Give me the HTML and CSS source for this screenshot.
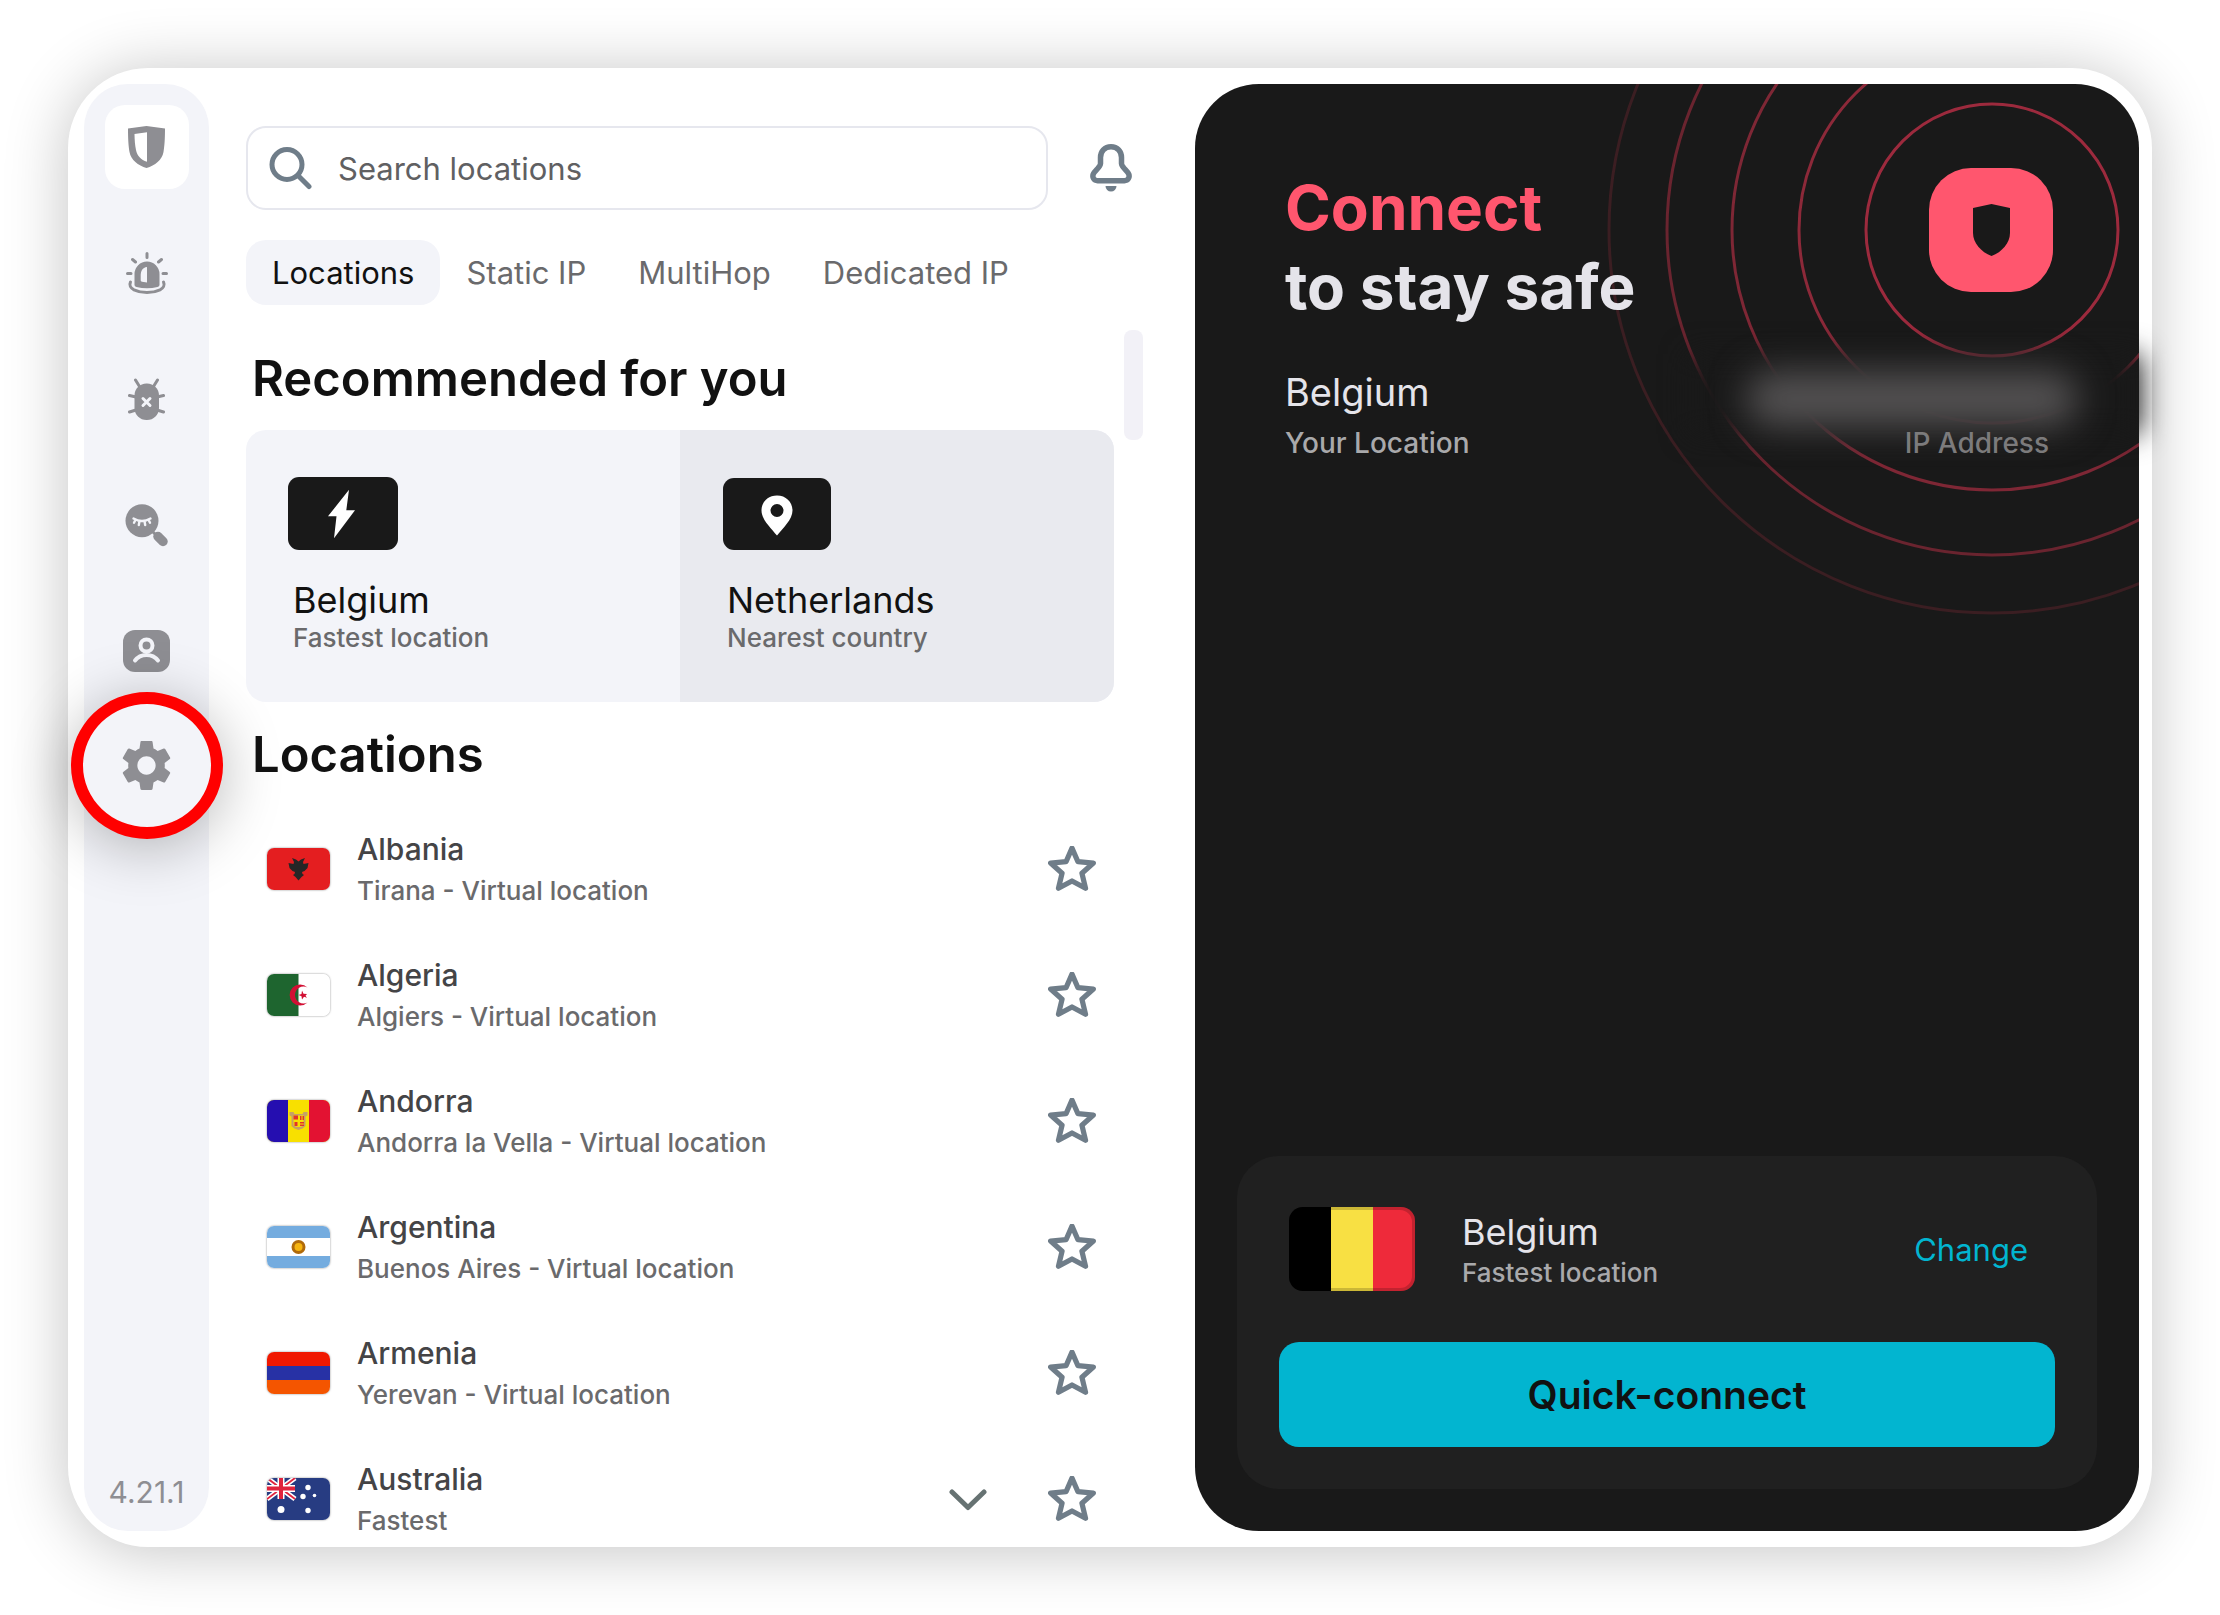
FILE: index.html
```html
<!DOCTYPE html>
<html lang="en">
<head>
<meta charset="utf-8">
<meta name="viewport" content="width=device-width, initial-scale=1">
<title>VPN locations</title>
<link rel="stylesheet" href="styles.css">
</head>
<body>
<div class="window">
  <nav class="sidebar" aria-label="Sections">
    <button class="nav-item nav-item-active" type="button" aria-label="VPN">
      <svg width="37" height="42" viewBox="0 0 37 42"><path fill="currentColor" fill-rule="evenodd" d="M0 2.500 18.500 0 37 2.500C37 13 36.500 20 35.500 26 34 34 27 39.500 18.500 42 10 39.500 3 34 1.500 26 .5 20 0 13 0 2.500ZM6.500 8C6.600 14 7 19 8 24 9 29.500 13 34 19 35.800V6.300Z"/></svg>
    </button>
    <button class="nav-item" type="button" aria-label="Alert">
      <svg width="42" height="43" viewBox="0 0 42 43"><path fill="currentColor" fill-rule="evenodd" d="M8.500 33V22a12.500 12.500 0 0 1 25 0v11q0 1.500-2 2-10.500 2.500-21 0-2-.5-2-2ZM21 15c-4.500.6-6.300 4-6.300 9v4.500q0 1 1.300 1.200l5 .8Z"/><g fill="none" stroke="currentColor" stroke-width="3" stroke-linecap="round"><path d="M4.500 30C3 33 4.500 36 8 37.800c7.500 3.600 18.500 3.600 26 0 3.500-1.800 5-4.800 3.500-7.800"/><path d="M21 1.500v4M1.500 21.500H5M37 21.500h3.500M6.500 7.500 9.500 10M35.500 7.500l-3 2.500"/></g></svg>
    </button>
    <button class="nav-item" type="button" aria-label="Antivirus">
      <svg width="37" height="43" viewBox="0 0 37 43"><rect x="6.500" y="5.500" width="24.500" height="36.500" rx="12" fill="currentColor"/><path fill="none" stroke="currentColor" stroke-width="3" stroke-linecap="round" d="m7.500 2 4 6.500M29.500 2l-4 6.500M1.500 17.500 8 19M35.500 17.500 29 19M1.500 34 8 32M35.500 34 29 32"/><path fill="none" stroke="#f3f4f9" stroke-width="3" stroke-linecap="round" d="m15 20.500 7 7m0-7-7 7"/></svg>
    </button>
    <button class="nav-item" type="button" aria-label="Private search">
      <svg width="43" height="43" viewBox="0 0 43 43"><circle cx="17" cy="16.700" r="16.500" fill="currentColor"/><path fill="none" stroke="currentColor" stroke-width="3" d="m27 27 5 5"/><path fill="none" stroke="currentColor" stroke-width="9.500" stroke-linecap="round" d="m33 32.500 5 5"/><path fill="none" stroke="#f3f4f9" stroke-width="2.400" stroke-linecap="round" d="M8.500 14.500q8.500 5 17 0M10.500 15.800l-1.500 3M14.500 17l-.7 4M19.500 17l.7 4M23.500 15.800l1.500 3"/></svg>
    </button>
    <button class="nav-item" type="button" aria-label="Alternative ID">
      <svg width="47" height="42" viewBox="0 0 47 42"><rect width="47" height="42" rx="12" fill="currentColor"/><g fill="none" stroke="#f3f4f9" stroke-width="4" stroke-linecap="round"><circle cx="23.500" cy="15.500" r="6"/><path d="M12 30.500c5.500-7.500 17.500-7.500 23 0"/></g></svg>
    </button>
    <button class="nav-item nav-item-marked" type="button" aria-label="Settings">
      <svg width="61" height="61" viewBox="0 0 24 24"><path fill="currentColor" d="M19.140 12.940c.04-.3.06-.61.06-.94 0-.32-.02-.64-.07-.94l2.030-1.580c.18-.14.23-.41.12-.61l-1.920-3.320c-.12-.22-.37-.29-.59-.22l-2.390.96c-.5-.38-1.030-.7-1.620-.94l-.36-2.540c-.04-.24-.24-.41-.48-.41h-3.840c-.24 0-.43.17-.47.41l-.36 2.540c-.59.24-1.130.57-1.620.94l-2.390-.96c-.22-.08-.47 0-.59.22L2.740 8.870c-.12.21-.08.47.12.61l2.030 1.580c-.05.3-.09.63-.09.94s.02.64.07.94l-2.030 1.580c-.18.14-.23.41-.12.61l1.920 3.320c.12.22.37.29.59.22l2.390-.96c.5.38 1.030.7 1.620.94l.36 2.540c.05.24.24.41.48.41h3.840c.24 0 .44-.17.47-.41l.36-2.540c.59-.24 1.130-.56 1.620-.94l2.390.96c.22.08.47 0 .59-.22l1.920-3.320c.12-.22.07-.47-.12-.61l-2.010-1.580zM12 15.600c-1.980 0-3.600-1.620-3.600-3.600s1.620-3.600 3.600-3.600 3.600 1.620 3.600 3.600-1.620 3.600-3.600 3.600z"/></svg>
    </button>
    <span class="version">4.21.1</span>
  </nav>

  <main class="main">
    <div class="toolbar">
      <label class="search">
        <svg width="43" height="43" viewBox="0 0 43 43" fill="none" stroke="currentColor" stroke-width="5" stroke-linecap="round" aria-hidden="true"><circle cx="18" cy="17.500" r="15"/><path d="m29 28.500 11 11"/></svg>
        <input class="search-input" type="text" placeholder="Search locations" aria-label="Search locations">
      </label>
      <button class="bell" type="button" aria-label="Notifications">
        <svg width="42" height="48" viewBox="0 0 42 48"><path fill="none" stroke="currentColor" stroke-width="5.500" d="M21 2.800C14.500 2.800 10.500 7.500 10.500 13.500V19.500C10.500 23 4.500 27 3.300 30 2 33.500 4 36.700 7.500 36.700H34.500C38 36.700 40 33.500 38.700 30 37.500 27 31.500 23 31.500 19.500V13.500C31.500 7.500 27.500 2.800 21 2.800Z"/><path fill="currentColor" d="M15.500 42h11a5.500 5.500 0 0 1-11 0Z"/></svg>
      </button>
    </div>

    <div class="tabs" role="tablist">
      <button class="tab tab-active" type="button" role="tab" aria-selected="true">Locations</button>
      <button class="tab" type="button" role="tab" aria-selected="false">Static IP</button>
      <button class="tab" type="button" role="tab" aria-selected="false">MultiHop</button>
      <button class="tab" type="button" role="tab" aria-selected="false">Dedicated IP</button>
    </div>

    <div class="scroll-wrap">
      <div class="scroll">
        <h2 class="heading">Recommended for you</h2>
        <div class="recommended">
          <button class="pick" type="button">
            <svg class="pick-icon" width="110" height="73" viewBox="0 0 110 73"><rect width="110" height="73" rx="11" fill="#191919"/><path fill="#fff" d="M61 12.700 40 39.300h8.500l-2.500 22L67 33.300h-8.700Z"/></svg>
            <span class="pick-title">Belgium</span>
            <span class="sub">Fastest location</span>
          </button>
          <button class="pick pick-alt" type="button">
            <svg class="pick-icon" width="110" height="73" viewBox="0 0 110 73"><rect x="1" y="1" width="108" height="72" rx="11" fill="#191919"/><path fill="#fff" fill-rule="evenodd" d="M55 18.500c-9 0-15.500 6.500-15.500 15C39.500 42.500 49 51 55 58.500 61 51 70.500 42.500 70.500 33.500c0-8.500-6.500-15-15.500-15Zm0 8.500a6.500 6.500 0 1 1 0 13 6.500 6.500 0 0 1 0-13Z"/></svg>
            <span class="pick-title">Netherlands</span>
            <span class="sub">Nearest country</span>
          </button>
        </div>

        <h2 class="heading">Locations</h2>
        <ul class="rows">
          <li class="row">
            <svg class="flag" viewBox="0 0 63 42"><path fill="#e41e20" d="M0 0h63v42H0z"/><path fill="#262626" d="m25 10 4 1.500 2.500 2 2.500-2 4-1.500-2 4 .5 2 5-1-1 5-3 3-2.500 1 .5 2 1.500 1-2.500 2-3 3.500-3-3.500-2.500-2 1.500-1 .5-2-2.500-1-3-3-1-5 5 1 .5-2Z"/></svg>
            <div class="place"><span class="name">Albania</span><span class="sub">Tirana - Virtual location</span></div>
            <button class="star" type="button" aria-label="Add Albania to favourites"><svg width="48" height="46" viewBox="1 2 46 44"><path d="M24 4 29.700 17 44.500 18.300 33.500 28 37 42.500 24 35.500 11 42.500 14.500 28 3.500 18.300 18.300 17Z"/></svg></button>
          </li>
          <li class="row">
            <svg class="flag" viewBox="0 0 63 42"><path fill="#fff" d="M0 0h63v42H0z"/><path fill="#1e652f" d="M0 0h31.500v42H0z"/><path fill="#d21034" d="M40.500 13.500a10.500 10.500 0 1 0 0 15 8.500 8.500 0 1 1 0-15Z"/><path fill="#d21034" d="m40 20-3.500-.3L35 16.500l-.5 3.500-3 1 3 1.200.5 3.300 2-2.800 3 1-1.500-2Z"/></svg>
            <div class="place"><span class="name">Algeria</span><span class="sub">Algiers - Virtual location</span></div>
            <button class="star" type="button" aria-label="Add Algeria to favourites"><svg width="48" height="46" viewBox="1 2 46 44"><path d="M24 4 29.700 17 44.500 18.300 33.500 28 37 42.500 24 35.500 11 42.500 14.500 28 3.500 18.300 18.300 17Z"/></svg></button>
          </li>
          <li class="row">
            <svg class="flag" viewBox="0 0 63 42"><path fill="#f8e000" d="M0 0h63v42H0z"/><path fill="#250eb0" d="M0 0h21v42H0z"/><path fill="#e31232" d="M42 0h21v42H42z"/><path fill="#c6a065" d="M22.500 12h4l1 2h8l1-2h4v3.500l-2 1V26l-3 2.500-4 1.500-4-1.500-3-2.500v-9.500l-2-1Z"/><path fill="#f8e000" d="M26.500 15.500h10V25.500q-5 3-10 0Z"/><path fill="#e2322b" d="M26.500 15.500h4.500v4h-4.500zM33 16h1.500v4H33zM35.500 16H37v4h-1.500zM27.500 22h3v4h-3zM33 22h4v1.500h-4zM33 24.500h4V26h-4z"/></svg>
            <div class="place"><span class="name">Andorra</span><span class="sub">Andorra la Vella - Virtual location</span></div>
            <button class="star" type="button" aria-label="Add Andorra to favourites"><svg width="48" height="46" viewBox="1 2 46 44"><path d="M24 4 29.700 17 44.500 18.300 33.500 28 37 42.500 24 35.500 11 42.500 14.500 28 3.500 18.300 18.300 17Z"/></svg></button>
          </li>
          <li class="row">
            <svg class="flag" viewBox="0 0 63 42"><path fill="#fff" d="M0 0h63v42H0z"/><path fill="#74acdf" d="M0 0h63v12H0zM0 30h63v12H0z"/><circle cx="31.500" cy="21" r="7" fill="#b06a0a"/><circle cx="31.500" cy="21" r="4" fill="#f6b40e"/></svg>
            <div class="place"><span class="name">Argentina</span><span class="sub">Buenos Aires - Virtual location</span></div>
            <button class="star" type="button" aria-label="Add Argentina to favourites"><svg width="48" height="46" viewBox="1 2 46 44"><path d="M24 4 29.700 17 44.500 18.300 33.500 28 37 42.500 24 35.500 11 42.500 14.500 28 3.500 18.300 18.300 17Z"/></svg></button>
          </li>
          <li class="row">
            <svg class="flag" viewBox="0 0 63 42"><path fill="#f01800" d="M0 0h63v14H0z"/><path fill="#2731a5" d="M0 14h63v14H0z"/><path fill="#f45500" d="M0 28h63v14H0z"/></svg>
            <div class="place"><span class="name">Armenia</span><span class="sub">Yerevan - Virtual location</span></div>
            <button class="star" type="button" aria-label="Add Armenia to favourites"><svg width="48" height="46" viewBox="1 2 46 44"><path d="M24 4 29.700 17 44.500 18.300 33.500 28 37 42.500 24 35.500 11 42.500 14.500 28 3.500 18.300 18.300 17Z"/></svg></button>
          </li>
          <li class="row">
            <svg class="flag" viewBox="0 0 63 42"><path fill="#273c82" d="M0 0h63v42H0z"/><path stroke="#fff" stroke-width="5" d="m0 0 28 21M28 0 0 21"/><path stroke="#e0233d" stroke-width="1.800" d="m0 0 28 21M28 0 0 21"/><path stroke="#fff" stroke-width="7" d="M14 0v21M0 10.500h28"/><path stroke="#e0233d" stroke-width="4" d="M14 0v21M0 10.500h28"/><g fill="#fff"><circle cx="14" cy="31.500" r="3.500"/><circle cx="41" cy="9.500" r="2.700"/><circle cx="36" cy="18.500" r="2.700"/><circle cx="47.500" cy="17.500" r="1.800"/><circle cx="41" cy="32.500" r="2.700"/></g></svg>
            <div class="place"><span class="name">Australia</span><span class="sub">Fastest</span></div>
            <button class="expand" type="button" aria-label="Show Australian cities"><svg width="38" height="26" viewBox="0 0 38 26"><path d="m3 6 16 15.500L35 6"/></svg></button>
            <button class="star" type="button" aria-label="Add Australia to favourites"><svg width="48" height="46" viewBox="1 2 46 44"><path d="M24 4 29.700 17 44.500 18.300 33.500 28 37 42.500 24 35.500 11 42.500 14.500 28 3.500 18.300 18.300 17Z"/></svg></button>
          </li>
        </ul>
      </div>
      <span class="thumb" aria-hidden="true"></span>
    </div>
  </main>

  <section class="panel" aria-label="Connection">
    <div class="rings" aria-hidden="true">
      <svg width="770" height="770" viewBox="-385 -385 770 770" fill="none" stroke="#c23048" stroke-width="3">
        <circle r="126" opacity=".78"/><circle r="193" opacity=".68"/><circle r="260" opacity=".6"/><circle r="325" opacity=".48"/><circle r="383" opacity=".2"/>
      </svg>
    </div>
    <div class="status">
      <h1 class="slogan"><span class="slogan-accent">Connect</span><br>to stay safe</h1>
      <span class="badge"><svg width="37" height="52" viewBox="0 0 37 52"><path fill="#191919" d="M0 4 18.500 0 37 4V29C37 39 29 48 18.500 52 8 48 0 39 0 29Z"/></svg></span>
    </div>
    <dl class="facts">
      <div class="fact"><dd class="fact-value">Belgium</dd><dt class="fact-label">Your Location</dt></div>
      <div class="fact fact-ip"><dd class="fact-value redacted" aria-label="Hidden"></dd><dt class="fact-label fact-label-dim">IP Address</dt></div>
    </dl>

    <div class="quick">
      <div class="quick-place">
        <svg class="quick-flag" width="126" height="84" viewBox="0 0 126 84"><path d="M0 0h42v84H0z"/><path fill="#f8e043" d="M42 0h42v84H42z"/><path fill="#ee2a3a" d="M84 0h42v84H84z"/><rect x="1" y="1" width="124" height="82" rx="14" fill="none" stroke="#000" stroke-opacity=".18" stroke-width="4"/></svg>
        <div class="quick-text"><span class="quick-title">Belgium</span><span class="sub sub-light">Fastest location</span></div>
        <a class="change" href="#">Change</a>
      </div>
      <button class="connect" type="button">Quick-connect</button>
    </div>
  </section>
</div>
</body>
</html>
```
FILE: styles.css
```css
* {
  box-sizing: border-box;
}

body {
  margin: 0;
  padding: 68px;
  background: #fff;
  color: #111;
  font-family: Inter, "Liberation Sans", sans-serif;
}

button {
  margin: 0;
  padding: 0;
  border: 0;
  background: none;
  color: inherit;
  font: inherit;
  text-align: left;
  cursor: pointer;
}

svg {
  display: block;
}

.window {
  display: grid;
  grid-template-columns: 125px minmax(0, 986fr) minmax(0, 944fr);
  height: calc(100vh - 136px);
  min-height: 1100px;
  padding: 16px 13px 0 16px;
  border-radius: 80px;
  background: #fff;
  box-shadow: 0 4px 64px rgba(0, 0, 0, 0.24);
}

/* Sidebar */

.sidebar {
  display: flex;
  flex-direction: column;
  align-items: center;
  gap: 42px;
  margin-bottom: 16px;
  padding: 21px 0;
  border-radius: 44px;
  background: #f3f4f9;
  color: #8e8e93;
}

.nav-item {
  display: flex;
  flex: none;
  align-items: center;
  justify-content: center;
  width: 84px;
  height: 84px;
  border-radius: 20px;
}

.nav-item-active {
  background: #fff;
}

/* The ring reaches past both edges of the sidebar */
.nav-item-marked {
  width: 152px;
  height: 147px;
  margin-top: -43px;
  border: 12px solid #f00;
  border-radius: 50%;
  background: #f3f4f9;
  box-shadow: 0 8px 60px rgba(0, 0, 0, 0.28);
}

.version {
  margin-top: auto;
  font-size: 30px;
  line-height: 36px;
}

/* Location picker */

.main {
  display: flex;
  flex-direction: column;
  min-height: 0;
  padding: 42px 42px 0 37px;
}

.toolbar {
  display: flex;
  gap: 21px;
}

.search {
  display: flex;
  flex: 1;
  align-items: center;
  gap: 26px;
  height: 84px;
  padding: 0 21px;
  border: 2px solid #e6e7ee;
  border-radius: 20px;
  color: #6f7d89;
}

.search-input {
  flex: 1;
  min-width: 0;
  padding: 0;
  border: 0;
  outline: 0;
  background: none;
  color: #111;
  font: inherit;
  font-size: 31px;
}

.search-input::placeholder {
  color: #606062;
  opacity: 1;
}

.bell {
  display: flex;
  align-items: center;
  justify-content: center;
  width: 84px;
  height: 84px;
  color: #6f7d89;
}

.tabs {
  display: flex;
  margin-top: 30px;
}

.tab {
  height: 65px;
  padding: 0 26px;
  border-radius: 20px;
  color: #6a6a6c;
  font-size: 31px;
  white-space: nowrap;
}

.tab-active {
  background: #f3f4f9;
  color: #111;
}

.scroll-wrap {
  position: relative;
  flex: 1;
  min-height: 0;
  margin-top: 25px;
}

.scroll {
  height: 100%;
  padding: 18px 39px 0 0;
  overflow-y: auto;
  scrollbar-width: none;
}

.thumb {
  position: absolute;
  top: 0;
  right: 10px;
  width: 19px;
  height: 110px;
  border-radius: 8px;
  background: #f2f1f7;
}

.heading {
  margin: 0 0 20px;
  padding-left: 6px;
  font-size: 49px;
  font-weight: 600;
  line-height: 62px;
}

.recommended {
  display: grid;
  grid-template-columns: 1fr 1fr;
  margin-bottom: 22px;
  border-radius: 20px;
  background: #f3f4f9;
  overflow: hidden;
}

.pick {
  display: flex;
  flex-direction: column;
  padding: 47px 47px 48px;
}

.pick-alt {
  background: #e9eaef;
}

.pick-icon {
  margin: 0 0 28px -5px;
}

.pick-title {
  font-size: 36px;
  line-height: 44px;
}

.sub {
  color: #6a6a6c;
  font-size: 26px;
  font-weight: 500;
  line-height: 32px;
}

.rows {
  margin: 0;
  padding: 0;
  list-style: none;
}

.row {
  display: flex;
  align-items: center;
  height: 126px;
  padding: 0 18px 0 21px;
}

.flag {
  flex: none;
  width: 63px;
  height: 42px;
  border-radius: 7px;
  box-shadow: 0 0 2px rgba(0, 0, 0, 0.5);
}

.place {
  display: flex;
  flex: 1;
  flex-direction: column;
  gap: 8px;
  padding-left: 27px;
}

.name {
  color: #444446;
  font-size: 30px;
  font-weight: 500;
  line-height: 36px;
}

.star,
.expand {
  flex: none;
}

.expand {
  margin-right: 61px;
}

.star path,
.expand path {
  fill: none;
  stroke: #6f7d89;
  stroke-width: 5;
  stroke-linecap: round;
  stroke-linejoin: round;
}

.expand path {
  stroke: #667272;
}

/* Connection panel */

.panel {
  position: relative;
  display: flex;
  flex-direction: column;
  margin-bottom: 16px;
  border-radius: 64px;
  background: #191919;
  color: #e5e4ea;
}

.rings {
  position: absolute;
  inset: 0;
  border-radius: inherit;
  overflow: hidden;
}

.rings svg {
  position: absolute;
  top: -239px;
  right: -238px;
}

.status {
  position: relative;
  display: flex;
  align-items: flex-start;
  justify-content: space-between;
  padding: 84px 86px 0 90px;
}

.slogan {
  margin: 0;
  font-size: 62px;
  font-weight: 700;
  line-height: 79px;
}

.slogan-accent {
  color: #ff566e;
}

.badge {
  display: flex;
  align-items: center;
  justify-content: center;
  width: 124px;
  height: 124px;
  border-radius: 42px;
  background: #ff566e;
}

.facts {
  position: relative;
  display: flex;
  justify-content: space-between;
  margin: 42px 0 0;
  padding: 0 90px;
}

.fact {
  display: flex;
  flex-direction: column;
  gap: 10px;
}

.fact-ip {
  align-items: flex-end;
}

.fact-value {
  margin: 0;
  font-size: 38px;
  line-height: 48px;
}

.fact-label {
  position: relative;
  color: #a9a9ab;
  font-size: 28px;
  font-weight: 500;
  line-height: 34px;
}

.fact-label-dim {
  color: #7c7b7c;
}

/* Smeared-out address: a dark patch under a soft grey bar */
.redacted {
  position: relative;
  width: 300px;
  height: 48px;
}

.redacted::before,
.redacted::after {
  content: "";
  position: absolute;
}

.redacted::before {
  inset: -14px -92px -18px -60px;
  background: #191919;
  filter: blur(14px);
}

.redacted::after {
  inset: 4px -28px -10px -2px;
  border-radius: 24px;
  background: #545253;
  filter: blur(18px);
}

.quick {
  position: relative;
  display: flex;
  flex-direction: column;
  gap: 51px;
  margin: auto 42px 42px;
  padding: 51px 42px 42px;
  border-radius: 42px;
  background: #202020;
}

.quick-place {
  display: flex;
  align-items: center;
  padding: 0 27px 0 10px;
}

.quick-flag {
  flex: none;
  border-radius: 14px;
}

.quick-text {
  display: flex;
  flex: 1;
  flex-direction: column;
  gap: 3px;
  padding-left: 47px;
}

.quick-title {
  font-size: 36px;
  line-height: 44px;
}

.sub-light {
  color: #a9a9ab;
}

.change {
  color: #02b5d0;
  font-size: 31px;
  text-decoration: none;
}

.connect {
  height: 105px;
  border-radius: 20px;
  background: #02b5d0;
  color: #111;
  font-size: 39px;
  font-weight: 600;
  text-align: center;
}
```
